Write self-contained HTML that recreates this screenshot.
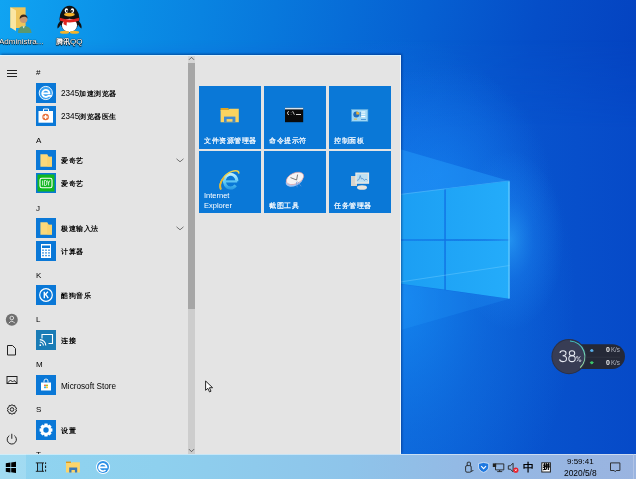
<!DOCTYPE html>
<html><head><meta charset="utf-8">
<style>
*{margin:0;padding:0;box-sizing:border-box}
html,body{width:636px;height:479px;overflow:hidden}
.a,.hd,.it,.tl,.dtxt{will-change:transform}
body{position:relative;font-family:"Liberation Sans",sans-serif;background:#0650c8}
.a{position:absolute}
#wall{left:0;top:0;width:636px;height:479px}
.dtxt{position:absolute;color:#fff;font-size:8px;line-height:9px;text-shadow:0 0 1px #000,0 0 1px #000,0 1px 1px #000;white-space:nowrap}
#menu{left:0;top:55px;width:401px;height:399px;background:#e4e4e4;border-top:1px solid #dcf4ff;border-right:1px solid #eef8fe;box-shadow:1px -1px 2px rgba(0,20,80,0.45)}
.hd{position:absolute;left:36px;font-size:8px;line-height:8px;color:#000}
.ic{position:absolute;left:36px;width:20px;height:20px;background:#0a78d7}
.it{position:absolute;left:61px;font-size:8.2px;line-height:10px;color:#000;white-space:nowrap}
.cj{font-size:7px;letter-spacing:0.5px;font-weight:600}
.tile{position:absolute;width:62.5px;height:62.5px;background:#0a78d7}
.tl{position:absolute;color:#fff;font-size:7.5px;line-height:10px;white-space:nowrap}
.cj2{font-size:7px;letter-spacing:0.5px;-webkit-text-stroke:0.2px #fff}
#task{left:0;top:454px;width:636px;height:25px;background:linear-gradient(90deg,#90d4f0 0%,#8ed0ee 25%,#8ec4ea 55%,#94b8e4 75%,#9ab4e0 100%)}
</style></head><body>
<svg id="wall" class="a" width="636" height="479" viewBox="0 0 636 479">
<defs>
<linearGradient id="bg" gradientUnits="userSpaceOnUse" x1="0" y1="0" x2="636" y2="120">
<stop offset="0" stop-color="#10a4f2"/>
<stop offset="0.2" stop-color="#0a8ee6"/>
<stop offset="0.42" stop-color="#0878dc"/>
<stop offset="0.65" stop-color="#0660d2"/>
<stop offset="0.82" stop-color="#054ec8"/>
<stop offset="1" stop-color="#0442c0"/>
</linearGradient>
<linearGradient id="bg2" gradientUnits="userSpaceOnUse" x1="400" y1="0" x2="636" y2="0">
<stop offset="0" stop-color="#0a60d6"/>
<stop offset="0.5" stop-color="#0854ce"/>
<stop offset="1" stop-color="#064ac8"/>
</linearGradient>
<linearGradient id="fadeTop" gradientUnits="userSpaceOnUse" x1="0" y1="40" x2="0" y2="130">
<stop offset="0" stop-color="#fff" stop-opacity="0"/>
<stop offset="1" stop-color="#fff" stop-opacity="1"/>
</linearGradient>
<mask id="m1"><rect width="636" height="479" fill="url(#fadeTop)"/></mask>
<radialGradient id="glow" cx="510" cy="240" r="60" gradientUnits="userSpaceOnUse" gradientTransform="translate(510 240) scale(0.9 1.5) translate(-510 -240)">
<stop offset="0" stop-color="#30b0ff" stop-opacity="0.6"/>
<stop offset="0.45" stop-color="#2090f8" stop-opacity="0.3"/>
<stop offset="1" stop-color="#2090f8" stop-opacity="0"/>
</radialGradient>
<radialGradient id="glow2" cx="400" cy="300" r="220" gradientUnits="userSpaceOnUse" gradientTransform="translate(400 300) scale(0.8 1.2) translate(-400 -300)">
<stop offset="0" stop-color="#1a9cff" stop-opacity="0.6"/>
<stop offset="0.5" stop-color="#1888f0" stop-opacity="0.3"/>
<stop offset="1" stop-color="#1888f0" stop-opacity="0"/>
</radialGradient>
<radialGradient id="glow3" cx="440" cy="175" r="110" gradientUnits="userSpaceOnUse">
<stop offset="0" stop-color="#1a90ff" stop-opacity="0.35"/>
<stop offset="1" stop-color="#1a90ff" stop-opacity="0"/>
</radialGradient>
<linearGradient id="pane" gradientUnits="userSpaceOnUse" x1="380" y1="0" x2="510" y2="0">
<stop offset="0" stop-color="#1a9cf2"/>
<stop offset="1" stop-color="#24acfa"/>
</linearGradient>
</defs>
<rect width="636" height="479" fill="url(#bg)"/>
<rect width="636" height="479" fill="url(#bg2)" mask="url(#m1)"/>
<rect width="636" height="479" fill="url(#glow2)"/>
<rect width="636" height="479" fill="url(#glow3)"/>
<rect width="636" height="479" fill="url(#glow)"/>
<polygon points="300,120 509.5,181 300,207" fill="#28a4ff" opacity="0.42"/>
<polygon points="300,271 509.5,298.7 300,359" fill="#28a4ff" opacity="0.2"/>
<polygon points="380,196.9 444.3,189 444.3,239.3 380,239.3" fill="url(#pane)"/>
<path d="M380,196.9L509.5,181" stroke="#60c4ff" stroke-width="0.8" opacity="0.7"/>
<polygon points="445.8,188.8 509.5,181 509.5,239.3 445.8,239.3" fill="url(#pane)"/>
<polygon points="380,240.8 444.3,240.8 444.3,289.6 380,280.9" fill="url(#pane)"/>
<polygon points="445.8,240.8 509.5,240.8 509.5,298.7 445.8,289.8" fill="url(#pane)"/>
<path d="M380,285L509.5,265.5" stroke="#7ad0ff" stroke-width="0.8" opacity="0.5"/>
<path d="M509,181.5v117" stroke="#70d0ff" stroke-width="1.2" opacity="0.9"/>
</svg>

<!-- desktop icons -->
<svg class="a" style="left:8px;top:5px" width="26" height="30" viewBox="0 0 26 30">
<polygon points="2.4,2.3 17.6,2.3 17.6,23 2.4,23" fill="#efc55a"/>
<polygon points="2.4,2.3 8,5.5 8,26 2.4,22.5" fill="#fbe6a2"/>
<path d="M10,28c0,-4.5 2,-7 6,-7c4,0 7.5,2.5 7.5,7z" fill="#5a9870"/>
<path d="M14.5,21.3l1.2,2.2l1.2,-2.2z" fill="#e8f0e8"/>
<circle cx="15.6" cy="14.2" r="3.8" fill="#c89a74"/>
<path d="M11.6,14.2c0,-3 1.5,-4.6 4,-4.6c2.6,0 4,1.6 4,4.2c-0.8,-1.4 -2,-2 -3.5,-2c-1.8,0 -3.5,1 -4.5,2.4z" fill="#3a2a1e"/>
</svg>
<div class="dtxt" style="left:-1px;top:37px">Administra...</div>
<svg class="a" style="left:56px;top:3px" width="26" height="31" viewBox="0 0 26 31">
<path d="M4.5,18c-2.5,2 -3.5,5 -3,7.5c1.5,-1 2.5,-2.5 3.5,-4z M22.5,18c2.5,2 3.5,5 3,7.5c-1.5,-1 -2.5,-2.5 -3.5,-4z" fill="#111"/>
<ellipse cx="13.5" cy="16" rx="10" ry="13.2" fill="#111"/>
<ellipse cx="13.5" cy="22.3" rx="7.6" ry="6.6" fill="#fff"/>
<ellipse cx="10.4" cy="7.6" rx="1.7" ry="2.3" fill="#fff"/><ellipse cx="16.4" cy="7.6" rx="1.7" ry="2.3" fill="#fff"/>
<circle cx="10.9" cy="8" r="0.9" fill="#000"/><circle cx="15.9" cy="8" r="0.9" fill="#000"/>
<ellipse cx="13.4" cy="11.6" rx="5.3" ry="1.8" fill="#f5b42a"/>
<path d="M3.8,14.8q9.7,3.5 19.4,0l-0.3,3q-9.4,3.2 -18.8,0z" fill="#e0241e"/>
<path d="M7.5,17.5l3.4,0.6l-0.3,4.6l-3,-1.4z" fill="#e0241e"/>
<ellipse cx="8.5" cy="29.2" rx="4.6" ry="1.5" fill="#f5b42a"/><ellipse cx="18.5" cy="29.2" rx="4.6" ry="1.5" fill="#f5b42a"/>
</svg>
<div class="dtxt" style="left:56px;top:37px"><span style="font-size:7px;font-weight:bold">腾讯</span>QQ</div>

<!-- start menu -->
<div id="menu" class="a"></div>
<!-- left rail -->
<svg class="a" style="left:0;top:56px" width="26" height="398" viewBox="0 56 26 398">
<g stroke="#222" stroke-width="1" fill="none">
<path d="M7,70.5h10M7,73.5h10M7,76.5h10"/>
</g>
<circle cx="11.8" cy="319.7" r="6" fill="#6f6f6f"/>
<circle cx="11.8" cy="318" r="1.8" fill="none" stroke="#e8e8e8" stroke-width="0.9"/>
<path d="M8.8,323.2q3,-4 6,0" fill="none" stroke="#e8e8e8" stroke-width="0.9"/>
<g stroke="#222" stroke-width="1" fill="none">
<path d="M7.5,345.5h5l3,3v6.5h-8z"/>
<rect x="7" y="376.5" width="10" height="7"/>
<path d="M7.5,383l3,-3l2,2l1.5,-1.5l3,2.5"/>
<circle cx="12" cy="409.5" r="1.8"/>
<path d="M12,404.5l1,1.3l1.7,-0.4l0.4,1.7l1.5,0.9l-0.7,1.5l0.7,1.5l-1.5,0.9l-0.4,1.7l-1.7,-0.4l-1,1.3l-1,-1.3l-1.7,0.4l-0.4,-1.7l-1.5,-0.9l0.7,-1.5l-0.7,-1.5l1.5,-0.9l0.4,-1.7l1.7,0.4z"/>
<path d="M9.3,435.6a4.6,4.6 0 1 0 5,0M11.8,433.8v5"/>
</g>
</svg>
<!-- headers -->
<div class="hd" style="top:69px">#</div>
<div class="hd" style="top:137px">A</div>
<div class="hd" style="top:204.5px">J</div>
<div class="hd" style="top:271.5px">K</div>
<div class="hd" style="top:316px">L</div>
<div class="hd" style="top:361px">M</div>
<div class="hd" style="top:406px">S</div>
<div class="hd" style="top:451px">T</div>
<!-- items -->
<div class="ic" style="top:83px"><svg width="20" height="20" viewBox="0 0 20 20"><circle cx="9.8" cy="10" r="6.6" fill="#3aa2f2" stroke="#fff" stroke-width="0.9"/><path d="M6.2,10.3h7.2a3.6,3.5 0 1 0 -1,2.6h3.4" fill="none" stroke="#fff" stroke-width="1.8"/></svg></div>
<div class="it" style="top:89px">2345<span class="cj">加速浏览器</span></div>
<div class="ic" style="top:106px"><svg width="20" height="20" viewBox="0 0 20 20"><path d="M7.5,5v-2h5v2" fill="none" stroke="#fff" stroke-width="1"/><rect x="2.5" y="5" width="14.5" height="11.7" fill="#fff"/><circle cx="9.6" cy="11" r="3.3" fill="#e8703a"/><path d="M9.6,8.9v4.2M7.5,11h4.2" stroke="#fff" stroke-width="1.3"/></svg></div>
<div class="it" style="top:112px">2345<span class="cj">浏览器医生</span></div>
<div class="ic" style="top:150px"><svg width="20" height="20" viewBox="0 0 20 20"><path d="M4.4,4.3h6.8l1.4,2.4h3.4v10h-11.6z" fill="#fbd97a"/><path d="M11.2,4.3l1.4,2.4h3.4v10h-4.8z" fill="#f6cf68" opacity="0.6"/></svg></div>
<div class="it" style="top:156px"><span class="cj">爱奇艺</span></div>
<div class="ic" style="top:173px"><svg width="20" height="20" viewBox="0 0 20 20"><rect x="1.5" y="1.5" width="17" height="17" fill="#10b820"/><rect x="4" y="5.2" width="12" height="9.6" rx="1.8" fill="none" stroke="#fff" stroke-width="1.1"/><path d="M6.6,7.5v5M8.4,7.5h1.2a1.3,2.5 0 0 1 0,5h-1.2z M11.4,7.5l1.2,2.4l1.2,-2.4M12.6,9.9v2.6" stroke="#fff" stroke-width="0.8" fill="none"/></svg></div>
<div class="it" style="top:179px"><span class="cj">爱奇艺</span></div>
<div class="ic" style="top:218px"><svg width="20" height="20" viewBox="0 0 20 20"><path d="M4.4,4.3h6.8l1.4,2.4h3.4v10h-11.6z" fill="#fbd97a"/><path d="M11.2,4.3l1.4,2.4h3.4v10h-4.8z" fill="#f6cf68" opacity="0.6"/></svg></div>
<div class="it" style="top:224px"><span class="cj">极速输入法</span></div>
<div class="ic" style="top:241px"><svg width="20" height="20" viewBox="0 0 20 20"><rect x="5" y="3" width="10" height="14" fill="#fff"/><rect x="6" y="4.5" width="8" height="2.5" fill="#0a78d7"/><g fill="#0a78d7"><rect x="6.3" y="8.5" width="1.4" height="1.4"/><rect x="9.3" y="8.5" width="1.4" height="1.4"/><rect x="12.3" y="8.5" width="1.4" height="1.4"/><rect x="6.3" y="11.2" width="1.4" height="1.4"/><rect x="9.3" y="11.2" width="1.4" height="1.4"/><rect x="12.3" y="11.2" width="1.4" height="1.4"/><rect x="6.3" y="13.9" width="1.4" height="1.4"/><rect x="9.3" y="13.9" width="1.4" height="1.4"/><rect x="12.3" y="13.9" width="1.4" height="1.4"/></g></svg></div>
<div class="it" style="top:247px"><span class="cj">计算器</span></div>
<div class="ic" style="top:285px"><svg width="20" height="20" viewBox="0 0 20 20"><circle cx="10" cy="10" r="6.3" fill="none" stroke="#fff" stroke-width="1.2"/><path d="M8.3,6.8v6.4M8.5,10.2l3.4,-3.4M9.6,9.2l2.6,4" fill="none" stroke="#fff" stroke-width="1.4"/></svg></div>
<div class="it" style="top:291px"><span class="cj">酷狗音乐</span></div>
<div class="ic" style="top:330px;background:#1a7cb6"><svg width="20" height="20" viewBox="0 0 20 20"><path d="M6,8.5v-4h10.5v9h-4" fill="none" stroke="#fff" stroke-width="1.1"/><path d="M3.8,9.6a6,6 0 0 1 6,6M3.8,12a3.6,3.6 0 0 1 3.6,3.6" fill="none" stroke="#fff" stroke-width="1.1"/><circle cx="4.3" cy="15.2" r="0.9" fill="#fff"/></svg></div>
<div class="it" style="top:336px"><span class="cj">连接</span></div>
<div class="ic" style="top:375px"><svg width="20" height="20" viewBox="0 0 20 20"><path d="M8,7.5v-1.5a2,2 0 0 1 4,0v1.5" fill="none" stroke="#fff" stroke-width="0.9"/><rect x="5" y="7.5" width="10" height="8" fill="#fff"/><rect x="8.2" y="9.6" width="1.6" height="1.6" fill="#f25022"/><rect x="10.2" y="9.6" width="1.6" height="1.6" fill="#7fba00"/><rect x="8.2" y="11.6" width="1.6" height="1.6" fill="#00a4ef"/><rect x="10.2" y="11.6" width="1.6" height="1.6" fill="#ffb900"/></svg></div>
<div class="it" style="top:382px">Microsoft Store</div>
<div class="ic" style="top:420px"><svg width="20" height="20" viewBox="0 0 20 20"><path d="M14.52,8.11L16.42,8.49L16.42,11.51L14.52,11.89L14.53,11.86L15.61,13.47L13.47,15.61L11.86,14.53L11.89,14.52L11.51,16.42L8.49,16.42L8.11,14.52L8.14,14.53L6.53,15.61L4.39,13.47L5.47,11.86L5.48,11.89L3.58,11.51L3.58,8.49L5.48,8.11L5.47,8.14L4.39,6.53L6.53,4.39L8.14,5.47L8.11,5.48L8.49,3.58L11.51,3.58L11.89,5.48L11.86,5.47L13.47,4.39L15.61,6.53L14.53,8.14Z" fill="#fff"/><circle cx="10" cy="10" r="2.7" fill="#0a78d7"/></svg></div>
<div class="it" style="top:426px"><span class="cj">设置</span></div>
<!-- chevrons -->
<svg class="a" style="left:176px;top:158px" width="8" height="5"><path d="M0.5,0.8l3.5,3l3.5,-3" fill="none" stroke="#666" stroke-width="0.9"/></svg>
<svg class="a" style="left:176px;top:226px" width="8" height="5"><path d="M0.5,0.8l3.5,3l3.5,-3" fill="none" stroke="#666" stroke-width="0.9"/></svg>
<!-- scrollbar -->
<div class="a" style="left:188px;top:56px;width:7px;height:398px;background:#cdcdcd"></div>
<div class="a" style="left:188px;top:56px;width:7px;height:7px;background:#d6d6d6"></div>
<div class="a" style="left:188px;top:63px;width:7px;height:246px;background:#a6a6a6"></div>
<svg class="a" style="left:188px;top:56px" width="7" height="5"><path d="M1,3.8l2.5,-2.5l2.5,2.5" fill="none" stroke="#444" stroke-width="0.8"/></svg>
<svg class="a" style="left:188px;top:448px" width="7" height="5"><path d="M1,1.2l2.5,2.5l2.5,-2.5" fill="none" stroke="#444" stroke-width="0.8"/></svg>


<!-- tiles -->
<div class="tile" style="left:198.5px;top:86px"></div>
<div class="tile" style="left:263.5px;top:86px"></div>
<div class="tile" style="left:328.5px;top:86px"></div>
<div class="tile" style="left:198.5px;top:150.5px"></div>
<div class="tile" style="left:263.5px;top:150.5px"></div>
<div class="tile" style="left:328.5px;top:150.5px"></div>
<svg class="a" style="left:198px;top:86px" width="194" height="128" viewBox="198 86 194 128">
<defs>
<linearGradient id="ieg" x1="0" y1="0" x2="0" y2="1"><stop offset="0" stop-color="#b8ecff"/><stop offset="0.6" stop-color="#5cc8f4"/><stop offset="1" stop-color="#2e9ee4"/></linearGradient>
</defs>
<!-- explorer -->
<rect x="220.6" y="108" width="8" height="3" fill="#e2a51e"/>
<path d="M220.6,110h7.5l1.5,-1.2h9.2v13.4h-18.2z" fill="#fbd35f"/>
<rect x="224" y="116.6" width="11.4" height="5.6" fill="#3f8ad2"/>
<rect x="226.6" y="119.1" width="5.9" height="2.6" fill="#fbd35f"/>
<!-- cmd -->
<rect x="285" y="107.8" width="18.2" height="14.4" fill="#0a0a0a"/>
<rect x="285" y="107.8" width="18.2" height="1.6" fill="#d8e4ee"/>
<path d="M289,111.5a1.5,1.6 0 1 0 0,3.2" fill="none" stroke="#eee" stroke-width="0.8"/>
<path d="M291.2,112v0.4M291.2,114v0.4M292.6,111.2l1.8,3.5" stroke="#eee" stroke-width="0.8"/>
<rect x="296" y="114" width="5" height="0.9" fill="#eee"/>
<!-- control panel -->
<rect x="351.6" y="109.4" width="16.3" height="11.9" fill="#9fd8f6" stroke="#5aa8dc" stroke-width="0.6"/>
<circle cx="356.3" cy="114.6" r="3" fill="#1f6fc0"/>
<path d="M356.3,114.6v-3a3,3 0 0 1 3,3z" fill="#f2b230"/>
<path d="M361.3,112h4M361.3,114.3h4M361.3,116.6h4" stroke="#fff" stroke-width="1.1"/>
<path d="M360.2,112v4.6" stroke="#1f6fc0" stroke-width="0.8"/>
<rect x="354" y="118.5" width="3" height="1.3" fill="#d9c06a"/>
<rect x="361" y="119.3" width="5" height="0.6" fill="#1f6fc0"/>
<!-- IE -->
<path d="M236.9,181.2A6.3,6.9 0 1 0 235.6,185.4" fill="none" stroke="url(#ieg)" stroke-width="3"/>
<path d="M224.8,181.4h12.4" stroke="#5cc4f4" stroke-width="2.2"/>
<path d="M220.8,189.5C218.2,184 223.5,174.2 232,171.4C236.2,170.1 239.3,170.9 238.7,173.6" fill="none" stroke="#f2d248" stroke-width="1.5"/>
<path d="M220.8,189.5C219.5,186 221,181 224,177.5" fill="none" stroke="#e8b830" stroke-width="1.8"/>
<!-- snipping -->
<ellipse cx="294.3" cy="180.6" rx="9.2" ry="5.3" transform="rotate(-24 294.3 180.6)" fill="#a4c4f0"/>
<ellipse cx="295" cy="178.4" rx="9.2" ry="5.4" transform="rotate(-24 295 178.4)" fill="#f6f4f4" stroke="#e49a9a" stroke-width="0.6"/>
<path d="M290.5,177.6L296.6,180L297.6,174.6" stroke="#5a5a5a" stroke-width="0.8" fill="none"/>
<path d="M297.4,181.5l3.8,4.8M296.4,181.8l0.8,5.5" stroke="#6a9ce0" stroke-width="0.7"/>
<!-- task manager -->
<rect x="351" y="176" width="6" height="10" fill="#d8d4cc"/>
<ellipse cx="362" cy="187.5" rx="5" ry="2.3" fill="#e8e4dc"/>
<rect x="355.3" y="172.5" width="13.8" height="11.3" fill="#ece8e2"/>
<rect x="356.6" y="173.8" width="11.2" height="8.6" fill="#bfe0f2"/>
<path d="M357,180.5l2,-1l1.2,-4l1.2,3.5l1.5,-0.5l1.5,2l1.5,-1.5l1.5,1.2" fill="none" stroke="#3a7cc0" stroke-width="0.6"/>
</svg>
<div class="tl" style="left:203.5px;top:135.5px"><span class="cj2">文件资源管理器</span></div>
<div class="tl" style="left:268.5px;top:135.5px"><span class="cj2">命令提示符</span></div>
<div class="tl" style="left:333.5px;top:135.5px"><span class="cj2">控制面板</span></div>
<div class="tl" style="left:203.5px;top:190.8px;font-size:7.5px;line-height:10.2px">Internet<br>Explorer</div>
<div class="tl" style="left:268.5px;top:200.5px"><span class="cj2">截图工具</span></div>
<div class="tl" style="left:333.5px;top:200.5px"><span class="cj2">任务管理器</span></div>
<svg class="a" style="left:200px;top:376px" width="18" height="20" viewBox="200 376 18 20"><path d="M205.6,381V390.3L207.8,388.3L209.5,391.9L211,391.2L209.4,387.7H212.6Z" fill="#fff" stroke="#111" stroke-width="0.9" stroke-linejoin="round"/></svg>
<!-- widget -->
<svg class="a" style="left:548px;top:336px" width="80" height="42" viewBox="548 336 80 42">
<path d="M575,344.2h37.6a12.4,12.4 0 0 1 0,24.8h-37.6z" fill="#252937"/>
<path d="M586,357.2h34" stroke="#363a48" stroke-width="0.6"/>
<circle cx="569" cy="356.6" r="17.6" fill="#2c3044"/>
<circle cx="569" cy="356.6" r="16.6" fill="#383d55"/>
<defs><linearGradient id="arcg" x1="0" y1="0" x2="0" y2="1"><stop offset="0" stop-color="#3cc8c8"/><stop offset="1" stop-color="#a8e8a0"/></linearGradient></defs><path d="M570,341A15.6,15.6 0 0 1 580.2,367.7" fill="none" stroke="url(#arcg)" stroke-width="1.1"/>
<path d="M589.6,351.3l2.2,-2.4l2.2,2.4z" fill="#5ab0ea"/>
<path d="M589.6,362l2.2,2.4l2.2,-2.4z" fill="#3cc46a"/>
<circle cx="591.8" cy="350.6" r="1.4" fill="#5ab0ea"/>
<circle cx="591.8" cy="362.7" r="1.4" fill="#3cc46a"/>
</svg>
<svg class="a" style="left:556px;top:348px" width="30" height="17" viewBox="556 348 30 17">
<g fill="none" stroke="#e6eaf2" stroke-width="1.05">
<path d="M560,353 C560,351.3 561.4,350.8 563,350.8 C564.8,350.8 566,351.7 566,353.1 C566,354.7 564.7,355.8 562.6,355.8 C565,355.8 566.5,357 566.5,358.8 C566.5,360.7 565,361.6 563,361.6 C561.2,361.6 559.9,360.9 559.6,359.4"/>
<ellipse cx="572" cy="353.2" rx="2.7" ry="2.4"/>
<ellipse cx="572" cy="358.7" rx="3.2" ry="2.9"/>
</g>
<g fill="none" stroke="#d8dce6" stroke-width="0.8">
<circle cx="577.2" cy="357.3" r="0.9"/><circle cx="580" cy="360.7" r="0.9"/><path d="M580.3,356.3l-3.4,5"/>
</g>
</svg>
<div class="a" style="left:605.5px;top:346px;color:#f0f0f0;font-size:7px;line-height:8px;font-weight:bold">0<span style="font-weight:normal;font-size:6.3px;color:#b0b4c0;margin-left:1px">K/s</span></div>
<div class="a" style="left:605.5px;top:359px;color:#f0f0f0;font-size:7px;line-height:8px;font-weight:bold">0<span style="font-weight:normal;font-size:6.3px;color:#b0b4c0;margin-left:1px">K/s</span></div>
<div id="task" class="a"></div>
<div class="a" style="left:0;top:454px;width:26px;height:25px;background:rgba(255,255,255,0.16)"></div>
<div class="a" style="left:0;top:454px;width:636px;height:1px;background:rgba(255,255,255,0.5)"></div>
<svg class="a" style="left:0;top:454px" width="636" height="25" viewBox="0 454 636 25">
<!-- win logo -->
<path d="M5.8,463.2l4.6,-0.7v4.6h-4.6z M11.2,462.4l4.8,-0.6v5.3h-4.8z M5.8,467.9h4.6v4.6l-4.6,-0.7z M11.2,467.9h4.8v5l-4.8,-0.6z" fill="#000"/>
<!-- task view -->
<rect x="38" y="463.5" width="4.2" height="7.2" fill="#4aa6d6" opacity="0.35"/>
<g stroke="#111" stroke-width="0.9" fill="none">
<path d="M35.8,462.9h8.2M35.8,471.3h8.2M37.5,463v8.3M42.5,463v8.3"/>
</g>
<path d="M45.6,462.4v1.6M45.6,465.6v2.4M45.6,469.6v2" stroke="#111" stroke-width="1"/>
<!-- explorer -->
<rect x="66" y="461.6" width="5" height="2" fill="#e09a1a"/>
<path d="M66,463h5.2l1,-0.8h7.7v10.4h-13.9z" fill="#fcd46a"/>
<path d="M69.2,472.6v-5h8v5h-2.3v-2.7h-3.4v2.7z" fill="#3a78b8"/>
<!-- edge/2345 -->
<circle cx="103" cy="467.1" r="7" fill="#fff"/>
<circle cx="103" cy="467.1" r="6" fill="#2d8fe6"/>
<path d="M99.2,467.4h7.4a3.8,3.6 0 1 0 -1.1,2.6" fill="none" stroke="#fff" stroke-width="1.7"/>
<!-- usb -->
<g stroke="#222" stroke-width="0.9" fill="none">
<path d="M467.2,465.6v-2.6a0.8,0.8 0 0 1 0.8,-0.8h1.6a0.8,0.8 0 0 1 0.8,0.8v2.6"/><rect x="465.6" y="465.6" width="5.6" height="6.6" rx="1.4"/><path d="M471.1,471.4q1.6,0 2.2,-1.4"/>
</g>
<!-- shield -->
<path d="M478.5,463.6l5.1,-1.2l5.1,1.2v3.5c0,2.5 -2.5,4.5 -5.1,5.3c-2.6,-0.8 -5.1,-2.8 -5.1,-5.3z" fill="#1e78e0" stroke="#fff" stroke-width="0.6"/>
<path d="M481.2,466.2l2.4,2.4l2.4,-2.4" fill="none" stroke="#fff" stroke-width="1.1"/>
<!-- network -->
<g stroke="#222" stroke-width="0.9" fill="none">
<path d="M495.5,463.9h8.3v6h-8.3z"/><path d="M499.6,470v1.6M497.2,471.6h5"/>
</g>
<rect x="492.8" y="463.4" width="3.4" height="3.6" fill="#222"/>
<!-- volume -->
<path d="M508.3,465.8h2l2.8,-2.6v8.6l-2.8,-2.6h-2z" fill="none" stroke="#222" stroke-width="0.9"/>
<circle cx="515.8" cy="470.2" r="2.6" fill="#e81e2a"/>
<path d="M514.8,469.2l2,2M516.8,469.2l-2,2" stroke="#fff" stroke-width="0.7"/>
<!-- pin box -->
<rect x="541.8" y="462.8" width="8.6" height="9.2" fill="#fff" stroke="#222" stroke-width="1"/>
<!-- notification -->
<path d="M610.5,462.9h9.4v7.6h-3.7l-1,1.2l-1,-1.2h-3.7z" fill="none" stroke="#222" stroke-width="0.9"/>
<path d="M633.5,454v25" stroke="#b8c8e8" stroke-width="0.8"/>
</svg>
<div class="a" style="left:522.5px;top:461.5px;font-size:10.5px;line-height:11px;color:#000;font-weight:bold">中</div>
<div class="a" style="left:542.6px;top:463.3px;font-size:7px;line-height:8px;color:#000;font-weight:bold;-webkit-text-stroke:0.2px #000">拼</div>
<div class="a" style="left:566.5px;top:457.5px;font-size:8px;line-height:8px;color:#000">9:59:41</div>
<div class="a" style="left:563.5px;top:468.5px;font-size:8.4px;line-height:8px;color:#000">2020/5/8</div>

</body></html>
